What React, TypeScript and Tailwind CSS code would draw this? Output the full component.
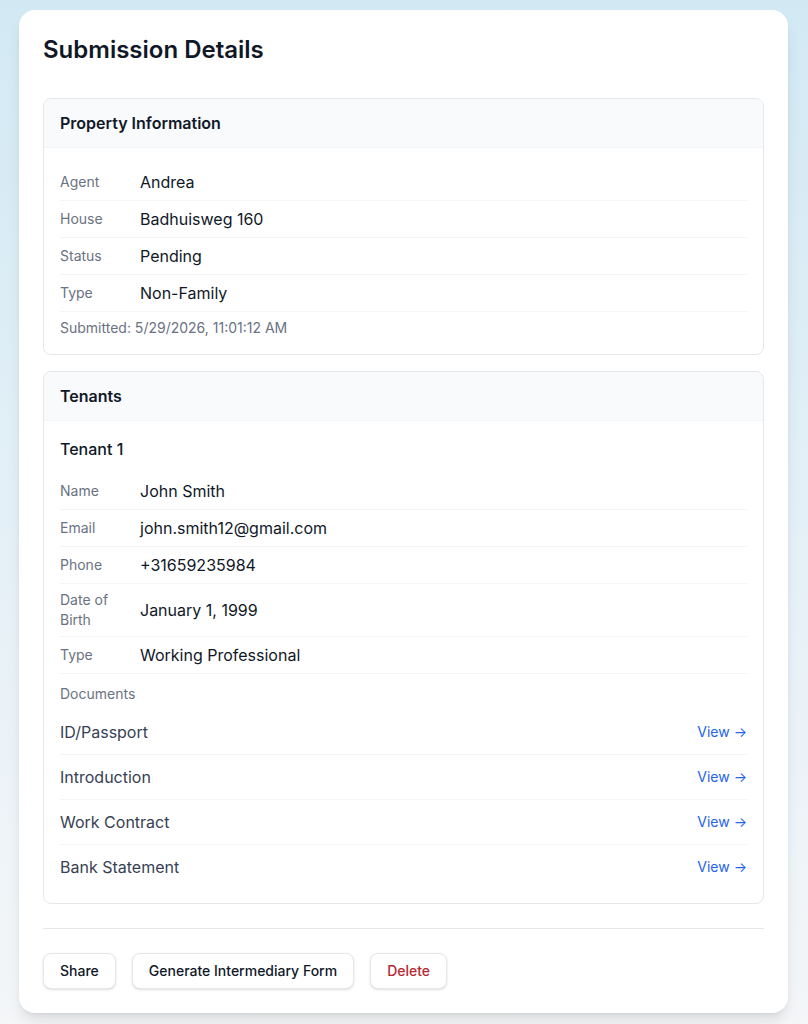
import React from "react";

const Row = ({ label, value }: { label: React.ReactNode; value: string }) => (
  <div className="flex items-center border-b border-gray-100 py-1.5">
    <div className="w-20 shrink-0 text-sm leading-5 text-gray-500">{label}</div>
    <div className="text-base leading-6 text-gray-900">{value}</div>
  </div>
);

const Doc = ({ name, last }: { name: string; last?: boolean }) => (
  <div className={`flex items-center justify-between py-2.5 ${last ? "" : "border-b border-gray-100"}`}>
    <span className="text-base leading-6 text-gray-700">{name}</span>
    <a className="text-sm leading-5 text-[#2563eb]">View →</a>
  </div>
);

export default function App() {
  return (
    <div
      className="min-h-screen bg-gradient-to-b from-[#d2e9f4] via-[#e4f0f7] to-[#f4f6f8] pt-[10px] pb-3"
      style={{ fontFamily: "Inter, 'Noto Sans', sans-serif" }}
    >
      <div className="ml-[19px] w-[769px] rounded-2xl bg-white p-6 shadow-lg">
        <h1 className="mb-8 text-2xl leading-8 font-semibold text-gray-900">Submission Details</h1>

        <div className="mb-4 overflow-hidden rounded-lg border border-gray-200">
          <div className="border-b border-gray-100 bg-gray-50 px-4 py-3 text-base leading-6 font-semibold text-gray-900">
            Property Information
          </div>
          <div className="p-4">
            <Row label="Agent" value="Andrea" />
            <Row label="House" value="Badhuisweg 160" />
            <Row label="Status" value="Pending" />
            <Row label="Type" value="Non-Family" />
            <div className="pt-1.5 text-sm leading-5 text-gray-500">Submitted: 5/29/2026, 11:01:12 AM</div>
          </div>
        </div>

        <div className="overflow-hidden rounded-lg border border-gray-200">
          <div className="border-b border-gray-100 bg-gray-50 px-4 py-3 text-base leading-6 font-semibold text-gray-900">
            Tenants
          </div>
          <div className="px-4 pt-4 pb-3.5">
            <div className="mb-3 text-base leading-6 font-medium text-gray-900">Tenant 1</div>
            <Row label="Name" value="John Smith" />
            <Row label="Email" value="john.smith12@gmail.com" />
            <Row label="Phone" value="+31659235984" />
            <Row label={<>Date of<br />Birth</>} value="January 1, 1999" />
            <Row label="Type" value="Working Professional" />
            <div className="mt-2.5 mb-1.5 text-sm leading-5 text-gray-500">Documents</div>
            <Doc name="ID/Passport" />
            <Doc name="Introduction" />
            <Doc name="Work Contract" />
            <Doc name="Bank Statement" last />
          </div>
        </div>

        <div className="mt-6 flex gap-4 border-t border-gray-200 pt-6">
          <button className="h-9 rounded-lg border border-gray-200 bg-white px-4 text-sm font-medium text-gray-900 shadow-sm">
            Share
          </button>
          <button className="h-9 rounded-lg border border-gray-200 bg-white px-4 text-sm font-medium text-gray-900 shadow-sm">
            Generate Intermediary Form
          </button>
          <button className="h-9 rounded-lg border border-gray-200 bg-white px-4 text-sm font-medium text-[#b42a32] shadow-sm">
            Delete
          </button>
        </div>
      </div>
    </div>
  );
}
